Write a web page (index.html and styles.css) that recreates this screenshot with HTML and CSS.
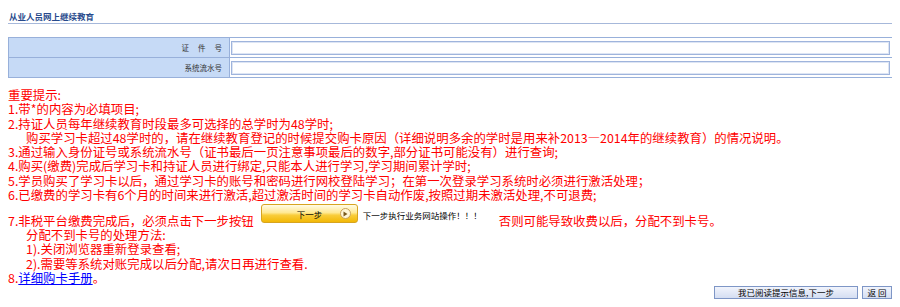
FILE: index.html
```html
<!DOCTYPE html>
<html lang="zh-CN">
<head>
  <meta charset="UTF-8">
  <title>从业人员网上继续教育</title>
  <link rel="stylesheet" href="styles.css">
</head>
<body>

  <div class="title">从业人员网上继续教育</div>

  <!-- 查询条件 -->
  <div class="form-table">
    <div class="label"><span class="spread">证件号</span></div>
    <div class="field"><input type="text" class="text-input"></div>
    <div class="label label-last">系统流水号</div>
    <div class="field field-last"><input type="text" class="text-input"></div>
  </div>

  <!-- 提示信息 -->
  <div class="notes">
    <div>重要提示:</div>
    <div>1.带*的内容为必填项目;</div>
    <div>2.持证人员每年继续教育时段最多可选择的总学时为48学时;</div>
    <div class="indent">购买学习卡超过48学时的，请在继续教育登记的时候提交购卡原因（详细说明多余的学时是用来补2013—2014年的继续教育）的情况说明。</div>
    <div>3.通过输入身份证号或系统流水号（证书最后一页注意事项最后的数字,部分证书可能没有）进行查询;</div>
    <div>4.购买(缴费)完成后学习卡和持证人员进行绑定,只能本人进行学习,学习期间累计学时;</div>
    <div>5.学员购买了学习卡以后，通过学习卡的账号和密码进行网校登陆学习；在第一次登录学习系统时必须进行激活处理；</div>
    <div>6.已缴费的学习卡有6个月的时间来进行激活,超过激活时间的学习卡自动作废,按照过期未激活处理,不可退费;</div>
    <div class="step7">
      <span class="step7-text">7.非税平台缴费完成后，必须点击下一步按钮</span>
      <span class="next-img">
        <span class="next-label">下一步</span>
        <span class="next-icon"><svg width="5" height="6" viewBox="0 0 5 6"><path d="M0.5 0.5 L4.5 3 L0.5 5.5 Z" fill="#7a5a1e"/></svg></span>
      </span>
      <span class="next-tip">下一步执行业务网站操作！！！</span>
      <span class="step7-warn">否则可能导致收费以后，分配不到卡号。</span>
    </div>
    <div class="indent">分配不到卡号的处理方法:</div>
    <div class="indent">1).关闭浏览器重新登录查看;</div>
    <div class="indent">2).需要等系统对账完成以后分配,请次日再进行查看.</div>
    <div>8.<a href="#" class="manual-link">详细购卡手册</a>。</div>
  </div>

  <div class="actions">
    <button class="btn btn-read">我已阅读提示信息,下一步</button>
    <button class="btn btn-back">返 回</button>
  </div>

</body>
</html>
```

FILE: styles.css
```css
body {
  margin: 8px;
  font-family: "Noto Sans CJK SC", sans-serif;
  background: #fff;
  color: #000;
}
.title {
  padding: 2px 0 0 1px;
  line-height: 13px;
  font-size: 8.5px;
  font-weight: bold;
  color: #284a8c;
  border-bottom: 1px solid #a6b8da;
}
.form-table {
  margin-top: 13px;
  display: grid;
  grid-template-columns: 221px 1fr;
  border: 1px solid #98b0da;
  width: 885px;
  box-sizing: border-box;
}
.label {
  height: 19px;
  background: #c6daf6;
  border-right: 1px solid #98b0da;
  border-bottom: 1px solid #98b0da;
  display: flex;
  align-items: center;
  justify-content: flex-end;
  padding-right: 7px;
  font-size: 7.5px;
  color: #333;
}
.spread {
  letter-spacing: 9px;
  margin-right: -9px;
}
.field {
  height: 19px;
  border-bottom: 1px solid #98b0da;
  display: flex;
  align-items: center;
  padding: 0 2px 0 1px;
}
.label-last,
.field-last {
  border-bottom: none;
}
.text-input {
  width: 100%;
  height: 14px;
  box-sizing: border-box;
  margin: 0;
  padding: 0 2px;
  border: 1px solid #9fb4dc;
  box-shadow: inset 0 0 0 1px #dde5f4;
  font-size: 9px;
}
.text-input:focus {
  outline: none;
}
.notes {
  margin-top: 10px;
  color: #ff0000;
  font-size: 12.4px;
  line-height: 14.3px;
  white-space: nowrap;
}
.indent {
  padding-left: 18px;
}
.step7 {
  display: flex;
  align-items: flex-start;
}
.step7-text {
  margin-top: 11.5px;
}
.next-img {
  margin: 2px 0 0 7px;
  width: 97px;
  height: 19px;
  box-sizing: border-box;
  border: 1px solid #d7a420;
  border-radius: 3px;
  background: linear-gradient(#fffbe6, #ffe993 45%, #f9cd3a 60%, #f2b806);
  display: flex;
  align-items: center;
  padding-left: 35px;
  color: #000;
  font-size: 8.5px;
  line-height: 10px;
}
.next-label {
  width: 26px;
  white-space: nowrap;
}
.next-icon {
  margin-left: 17px;
  width: 11px;
  height: 11px;
  box-sizing: border-box;
  border: 1px solid #c8a25c;
  border-radius: 50%;
  background: #fff6d6;
  display: flex;
  align-items: center;
  justify-content: center;
  padding-left: 1px;
}
.next-tip {
  margin: 7.5px 0 0 5px;
  font-size: 8.5px;
  line-height: 10px;
  color: #000;
}
.step7-warn {
  margin: 11.5px 0 0 17px;
}
.manual-link {
  color: #0000ff;
  text-decoration: underline;
}
.actions {
  margin-top: 1px;
  display: flex;
  justify-content: flex-end;
  gap: 4px;
}
.btn {
  height: 13px;
  margin: 0;
  padding: 0;
  border: 1px solid #7e96c6;
  background: linear-gradient(#f1f4fc, #d5def2);
  font-family: "Noto Sans CJK SC", sans-serif;
  font-size: 8.5px;
  line-height: 11px;
  color: #000;
  cursor: pointer;
}
.btn-read {
  width: 144px;
}
.btn-back {
  width: 30px;
}
```
